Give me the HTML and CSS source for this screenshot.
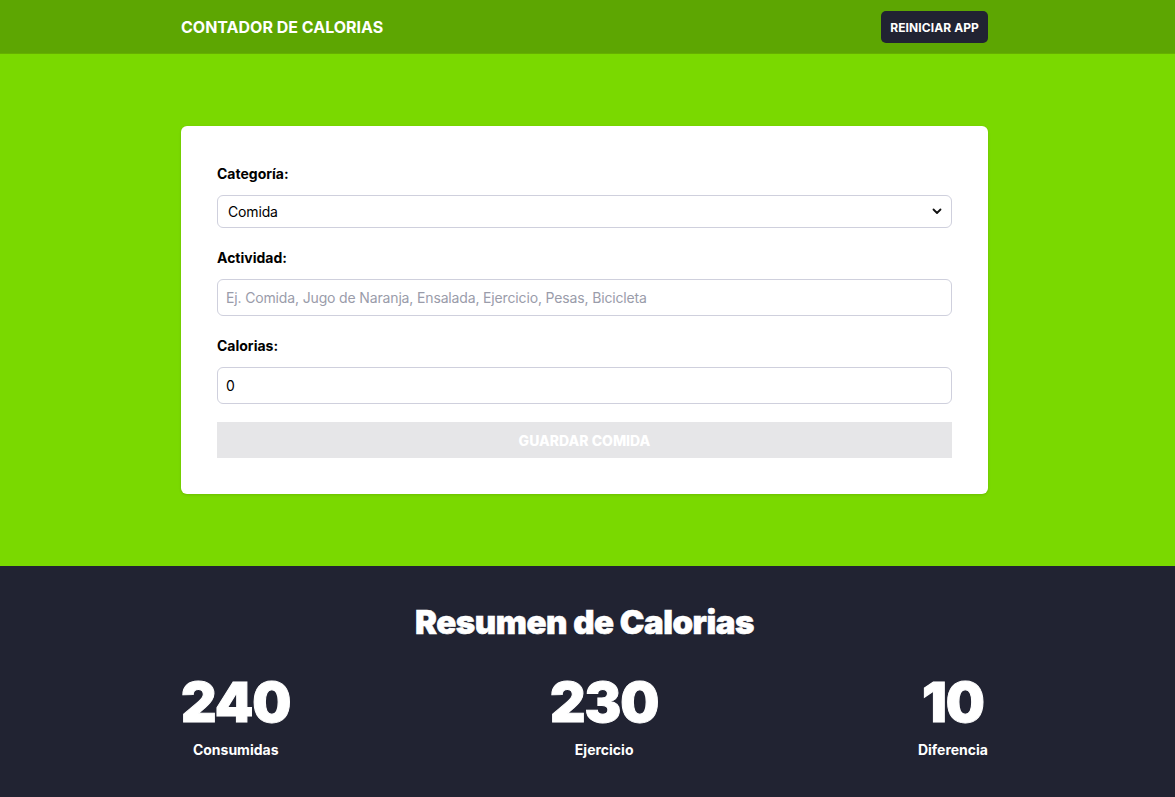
FILE: index.html
```html
<!DOCTYPE html>
<html lang="es">
<head>
<meta charset="utf-8">
<title>Contador de Calorias</title>
<link rel="stylesheet" href="styles.css">
</head>
<body>
<header class="topbar">
  <div class="wrap topbar-inner">
    <h1 class="brand">Contador de Calorias</h1>
    <button class="reset-btn" type="button">Reiniciar App</button>
  </div>
</header>

<section class="form-section">
  <div class="wrap">
    <form class="card">
      <div class="field">
        <label for="category">Categoría:</label>
        <div class="select-wrap">
          <select id="category" class="control select">
            <option>Comida</option>
            <option>Ejercicio</option>
          </select>
          <svg class="chevron" width="10" height="7" viewBox="0 0 10 7" aria-hidden="true"><path d="M1.5 1.5 L5 5 L8.5 1.5" fill="none" stroke="#111" stroke-width="1.8" stroke-linecap="round" stroke-linejoin="round"/></svg>
        </div>
      </div>
      <div class="field">
        <label for="activity">Actividad:</label>
        <input id="activity" class="control input" type="text" placeholder="Ej. Comida, Jugo de Naranja, Ensalada, Ejercicio, Pesas, Bicicleta">
      </div>
      <div class="field">
        <label for="calories">Calorias:</label>
        <input id="calories" class="control input" type="number" value="0">
      </div>
      <button class="save-btn" type="button" disabled>Guardar Comida</button>
    </form>
  </div>
</section>

<section class="summary">
  <div class="wrap">
    <h2 class="summary-title">Resumen de Calorias</h2>
    <div class="stats">
      <div class="stat"><span class="stat-num">240</span><span class="stat-label">Consumidas</span></div>
      <div class="stat"><span class="stat-num">230</span><span class="stat-label">Ejercicio</span></div>
      <div class="stat"><span class="stat-num">10</span><span class="stat-label">Diferencia</span></div>
    </div>
  </div>
</section>
</body>
</html>
```
FILE: styles.css
```css
* { box-sizing: border-box; }
html, body { margin: 0; padding: 0; }
body {
  font-family: Inter, "Noto Sans", "Liberation Sans", sans-serif;
  color: #111;
  background: #212332;
}
.wrap {
  width: 807px;
  margin: 0 auto;
  position: relative;
  left: -3px;
}
.topbar {
  background: #5da602;
  height: 54px;
  border-bottom: 1px solid #66b000;
}
.topbar-inner {
  height: 53px;
  display: flex;
  align-items: center;
  justify-content: space-between;
}
.brand {
  margin: 0;
  color: #fff;
  font-size: 16px;
  font-weight: 700;
  text-transform: uppercase;
}
.reset-btn {
  background: #212332;
  color: #fff;
  border: 0;
  border-radius: 5px;
  height: 32px;
  padding: 0 9px;
  font-family: inherit;
  font-size: 12px;
  font-weight: 700;
  text-transform: uppercase;
  letter-spacing: 0.1px;
  margin-top: 1px;
}
.form-section {
  background: #7ad900;
  padding: 72px 0 72px;
}
.card {
  background: #fff;
  border-radius: 6px;
  box-shadow: 0 1px 3px rgba(0,0,0,0.12);
  padding: 38px 36px 36px;
  display: flex;
  flex-direction: column;
  gap: 20px;
}
.field {
  display: flex;
  flex-direction: column;
  gap: 11px;
}
.field label {
  font-size: 14px;
  font-weight: 700;
  line-height: 20px;
  color: #000;
}
.control {
  width: 100%;
  border: 1px solid #cfd0dd;
  border-radius: 6px;
  background: #fff;
  font-family: inherit;
  font-size: 14px;
  color: #000;
  outline: none;
  letter-spacing: -0.15px;
}
.select-wrap { position: relative; }
.select {
  appearance: none;
  -webkit-appearance: none;
  height: 33px;
  padding: 0 10px;
}
.chevron {
  position: absolute;
  right: 10px;
  top: 13px;
  pointer-events: none;
}
.input {
  height: 37px;
  padding: 0 8px;
}
.input::placeholder { color: #9a9caa; }
.input[type=number]::-webkit-inner-spin-button,
.input[type=number]::-webkit-outer-spin-button { -webkit-appearance: none; margin: 0; }
.save-btn {
  margin-top: -2px;
  height: 36px;
  border: 0;
  background: #e6e6e8;
  color: #fff;
  font-family: inherit;
  font-size: 14px;
  font-weight: 800;
  text-transform: uppercase;
}
.summary {
  background: #212332;
  color: #fff;
  padding: 36px 0 40px;
}
.summary-title {
  margin: 0;
  text-align: center;
  font-size: 33px;
  font-weight: 900;
  line-height: 40px;
  letter-spacing: -0.45px;
  -webkit-text-stroke: 0.6px #fff;
}
.stats {
  margin-top: 30px;
  display: flex;
  justify-content: space-between;
}
.stat {
  display: flex;
  flex-direction: column;
  align-items: center;
}
.stat-num {
  font-size: 55px;
  font-weight: 900;
  line-height: 60px;
  letter-spacing: -1px;
  -webkit-text-stroke: 1px #fff;
}
.stat-label {
  margin-top: 8px;
  font-size: 14px;
  font-weight: 700;
  line-height: 20px;
}
```
